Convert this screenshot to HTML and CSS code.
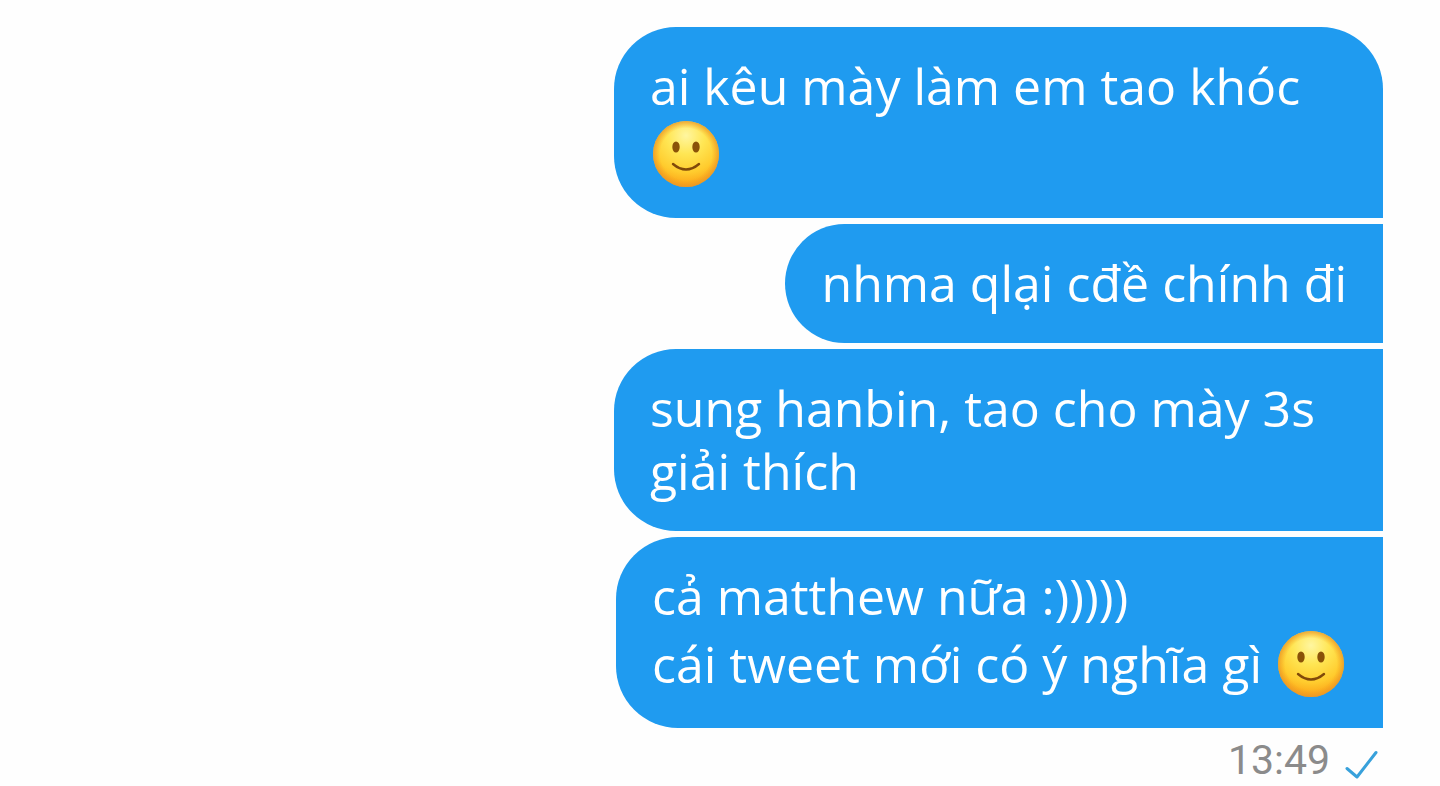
FILE: index.html
```
<!DOCTYPE html>
<html lang="vi">

<head>
    <meta charset="UTF-8">
    <meta name="viewport" content="width=device-width, initial-scale=1.0">
    <title>Messages</title>
    <link rel="stylesheet" href="styles.css">
</head>

<body>
    <!-- shared emoji drawing -->
    <svg class="defs" width="0" height="0" aria-hidden="true">
        <defs>
            <radialGradient id="face" cx="0.5" cy="0.22" r="0.8">
                <stop offset="0" stop-color="#fff6a0" />
                <stop offset="0.35" stop-color="#ffe654" />
                <stop offset="0.7" stop-color="#ffcc2e" />
                <stop offset="1" stop-color="#fb9a12" />
            </radialGradient>
            <radialGradient id="rim" cx="0.5" cy="0.5" r="0.5">
                <stop offset="0.78" stop-color="#f5a01c" stop-opacity="0" />
                <stop offset="1" stop-color="#e8962a" stop-opacity="0.8" />
            </radialGradient>
            <symbol id="smile" viewBox="0 0 72 72">
                <circle cx="36" cy="36" r="33" fill="url(#face)" />
                <circle cx="36" cy="36" r="33" fill="url(#rim)" />
                <ellipse cx="26" cy="29" rx="3.7" ry="5.6" fill="#8a5208" />
                <ellipse cx="46" cy="29" rx="3.7" ry="5.6" fill="#8a5208" />
                <path d="M23 46 Q36 57 49 46" fill="none" stroke="#80490a" stroke-width="2.4" stroke-linecap="round" />
            </symbol>
        </defs>
    </svg>

    <main class="chat">
        <div class="bubble first">ai kêu mày làm em tao khóc <svg class="emoji" role="img" aria-label="🙂"><use href="#smile" /></svg></div>
        <div class="bubble">nhma qlại cđề chính đi</div>
        <div class="bubble">sung hanbin, tao cho mày 3s giải thích</div>
        <div class="bubble">cả matthew nữa :)))))<br>cái tweet mới có ý nghĩa gì <svg class="emoji" role="img" aria-label="🙂"><use href="#smile" /></svg></div>
        <div class="status">
            <time datetime="13:49">13:49</time>
            <svg class="check" viewBox="0 0 34 30" aria-hidden="true">
                <path d="M3 18.5 L13 27 L32 2.5" />
            </svg>
        </div>
    </main>
</body>

</html>
```
FILE: styles.css
```
body {
    margin: 0;
    background-color: #fefefe;
    font-family: 'Open Sans', sans-serif;
}

.defs {
    position: absolute;
}

.chat {
    display: flex;
    flex-direction: column;
    align-items: flex-end;
    gap: 6px;
    padding: 27px 57px 0px 57px;
}

.bubble {
    max-width: 58%;
    box-sizing: border-box;
    padding: 28px 36px;
    border-radius: 62px 0px 0px 62px;
    background-color: #1f9bf0;
    color: white;
    font-size: 50px;
    line-height: 63px;
}

.first {
    border-top-right-radius: 62px;
}

.emoji {
    width: 72px;
    height: 72px;
    vertical-align: -17px;
}

.status {
    display: flex;
    align-items: flex-end;
    gap: 14px;
    padding-right: 5px;
    color: #8b8b8b;
    font-family: Roboto, sans-serif;
    font-size: 41px;
    line-height: 52px;
}

.check {
    width: 34px;
    height: 30px;
    margin-bottom: 6px;
}

.check path {
    fill: none;
    stroke: #38a1db;
    stroke-width: 3;
    stroke-linecap: round;
    stroke-linejoin: round;
}
```
